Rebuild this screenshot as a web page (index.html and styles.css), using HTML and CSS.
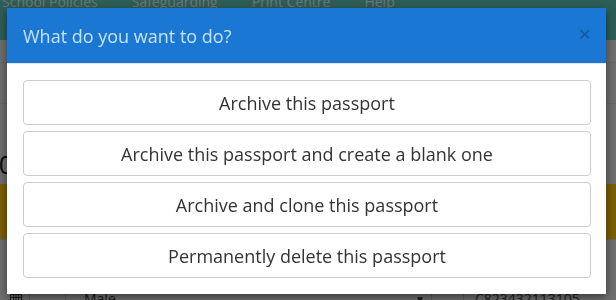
FILE: index.html
```html
<!DOCTYPE html>
<html>
  <head>
    <title>Passport</title>
    <link rel="stylesheet" href="styles.css">
  </head>
  <body>
    <nav class="topnav">
      <a>School Policies</a>
      <a>Safeguarding</a>
      <a>Print Centre</a>
      <a>Help</a>
    </nav>
    <div class="page">
      <div class="row"></div>
      <div class="row row-mid"></div>
      <div class="row-tall"><span class="big">10</span></div>
      <div class="banner"></div>
      <div class="fields">
        <span class="cal">
          <svg width="12" height="10" viewBox="0 0 12 10">
            <path d="M0.5 0.5h11v9h-11z M0.5 3.5h11 M0.5 6.5h11 M3.5 0.5v9 M6 0.5v9 M8.5 0.5v9" fill="none" stroke="#333" stroke-width="1"/>
          </svg>
        </span>
        <span class="cell-a"></span>
        <span class="select">Male<span class="caret">&#9660;</span></span>
        <span class="cell-b"></span>
        <span class="upn">C823432113105</span>
      </div>
    </div>

    <div class="backdrop">
      <div class="modal">
        <div class="modal-header">
          <h4>What do you want to do?</h4>
          <span class="close">&times;</span>
        </div>
        <div class="modal-body">
          <button class="choice">Archive this passport</button>
          <button class="choice">Archive this passport and create a blank one</button>
          <button class="choice">Archive and clone this passport</button>
          <button class="choice">Permanently delete this passport</button>
        </div>
      </div>
    </div>
  </body>
</html>
```

FILE: styles.css
```css
body {
  margin: 0;
  height: 300px;
  overflow: hidden;
  background-color: #dedede;
  font-family: "Open Sans", sans-serif;
  color: #333;
}

.topnav {
  display: flex;
  height: 40px;
  background-color: #5cbcb0;
  padding-left: 2px;
  overflow: hidden;
}
.topnav a {
  color: #d8ecea;
  font-size: 14px;
  line-height: 20px;
  margin-top: -8px;
  margin-right: 34px;
}

.row {
  height: 22px;
  border-bottom: 1px solid #cfcfcf;
}
.row-mid {
  height: 40px;
}
.row-tall {
  height: 80px;
  position: relative;
}
.big {
  position: absolute;
  left: -16px;
  top: 42px;
  font-size: 26px;
  color: #111;
}
.banner {
  height: 55px;
  background-color: #f9be00;
}
.fields {
  display: flex;
  height: 62px;
  border-top: 1px solid #c8c8c8;
  font-size: 14px;
  line-height: 20px;
}
.fields > span {
  display: flex;
  align-items: flex-start;
  padding-top: 49px;
  box-sizing: border-box;
}
.cal {
  width: 30px;
  padding-left: 10px;
  border-right: 1px solid #bbb;
}
.cal svg {
  margin-top: 5px;
}
.cell-a {
  width: 36px;
  border-right: 1px solid #bbb;
}
.select {
  width: 366px;
  padding-left: 18px;
  justify-content: space-between;
  border-right: 1px solid #bbb;
}
.caret {
  font-size: 10px;
  margin-right: 6px;
}
.cell-b {
  width: 32px;
  border-right: 1px solid #bbb;
}
.upn {
  padding-left: 11px;
  color: #444;
}

.backdrop {
  position: fixed;
  inset: 0;
  background-color: rgba(0, 0, 0, 0.5);
  padding: 8px 0 0 7px;
}
.modal {
  width: 599px;
  background-color: #fff;
  box-shadow: 0 3px 9px rgba(0, 0, 0, 0.5);
}
.modal-header {
  display: flex;
  align-items: center;
  justify-content: space-between;
  height: 55px;
  padding: 0 15px 0 16px;
  background-color: #1a78d4;
  border-bottom: 1px solid #e5e5e5;
}
.modal-header h4 {
  margin: 0;
  font-size: 18px;
  font-weight: normal;
  color: #c9e1f8;
}
.close {
  font-size: 22px;
  color: #15579a;
  line-height: 1;
  margin-bottom: 6px;
}
.modal-body {
  display: flex;
  flex-direction: column;
  gap: 6px;
  padding: 16px 15px 16px 16px;
}
.choice {
  height: 45px;
  background-color: #fff;
  border: 1px solid #cccccc;
  border-radius: 4px;
  font-family: "Open Sans", sans-serif;
  font-size: 18px;
  color: #333;
  cursor: pointer;
}
```
